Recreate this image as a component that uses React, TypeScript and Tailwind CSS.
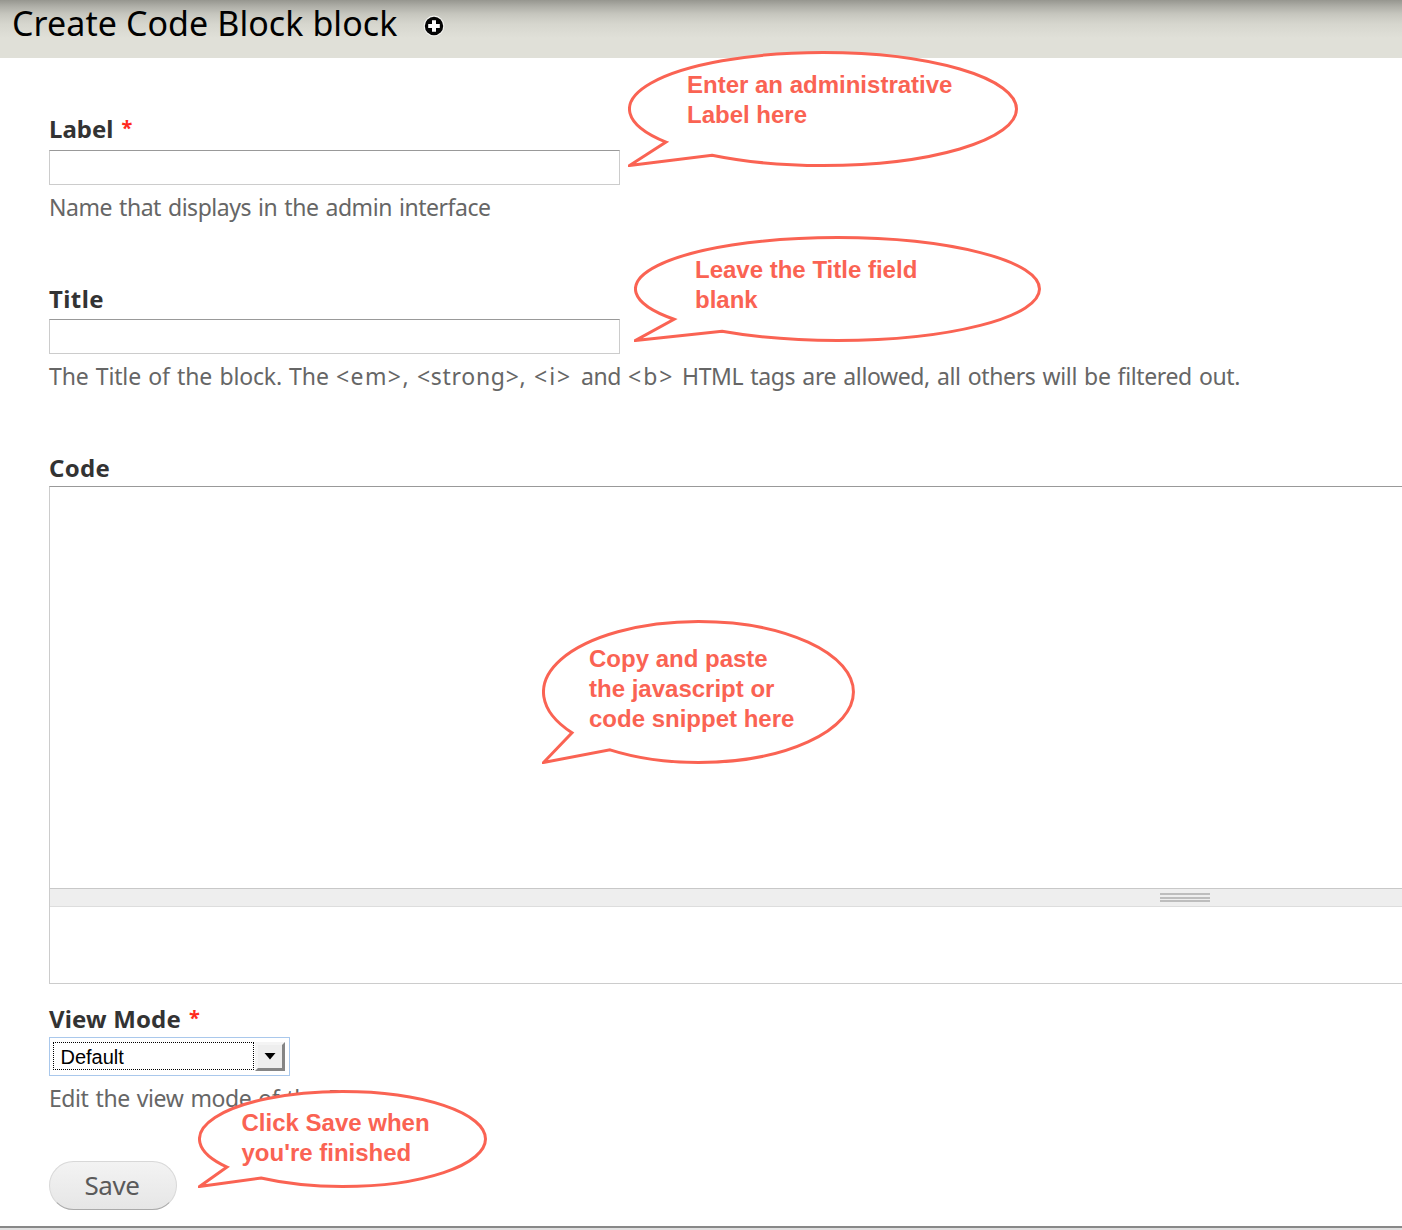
import React from "react";

type CalloutProps = {
  box: string;
  text: string;
  width: number;
  height: number;
  neck: [number, number];
  lines: string[];
};

function Callout({ box, text, width, height, neck, lines }: CalloutProps) {
  const cx = width / 2;
  const cy = height / 2;
  const rx = cx - 1.5;
  const ry = cy - 1.5;
  const lowerY = (x: number) => cy + ry * Math.sqrt(1 - ((x - cx) / rx) ** 2);
  const [a, b] = neck;
  return (
    <div className={`absolute ${box}`}>
      <svg className="block overflow-hidden" width={width} height={height}>
        <path
          d={`M${a} ${lowerY(a)} A${rx} ${ry} 0 0 1 ${cx} 1.5 A${rx} ${ry} 0 0 1 ${cx} ${height - 1.5} A${rx} ${ry} 0 0 1 ${b} ${lowerY(b)} L1.5 ${height - 1.5} Z`}
          fill="white"
          stroke="#fa6353"
          strokeWidth="3"
          strokeLinejoin="miter"
          strokeMiterlimit="10"
        />
      </svg>
      <div
        className={`absolute whitespace-nowrap font-['Liberation_Sans',sans-serif] text-[24px] leading-[30px] font-bold text-[#fa6353] ${text}`}
      >
        {lines.map((line) => (
          <div key={line}>{line}</div>
        ))}
      </div>
    </div>
  );
}

function Required() {
  return (
    <span className="ml-[8px] inline-block -translate-y-[3px] text-[20px] leading-[24px] font-bold tracking-normal text-[#ff2a20]">
      *
    </span>
  );
}

export default function App() {
  const label = "block h-[32px] whitespace-nowrap text-[24px] leading-[32px] font-bold text-[#333]";
  const desc =
    "mt-[6px] h-[33px] whitespace-nowrap text-[23px] leading-[32px] text-[#666] [word-spacing:1.5px]";
  const input =
    "block h-[35px] w-[571px] border border-[#ccc] border-t-[#999] bg-white outline-none";
  return (
    <div className="relative flex h-[1230px] w-[1402px] flex-col overflow-hidden bg-white font-['Noto_Sans',sans-serif]">
      <header className="flex h-[58px] shrink-0 bg-[linear-gradient(#96968f_0px,#adada6_6px,#c6c6be_14px,#d6d6ce_24px,#e0e0d8_38px)] pl-[12px]">
        <h1 className="h-[46px] whitespace-nowrap text-[34px] leading-[46px] tracking-[0.07px] text-black">
          Create Code Block block
        </h1>
        <svg className="absolute top-[15px] left-[423px]" width="22" height="22" viewBox="0 0 22 22">
          <circle cx="11" cy="11" r="10.4" fill="#f4f4f1" />
          <circle cx="11" cy="11" r="9.2" fill="#050505" />
          <path d="M11 5.2v11.6M5.2 11h11.6" stroke="white" strokeWidth="4" />
        </svg>
      </header>
      <form className="flex flex-col pl-[49px]">
        <label className={`${label} mt-[55px]`}>
          Label
          <Required />
        </label>
        <input className={`${input} mt-[5px]`} />
        <p className={`${desc} tracking-[-0.46px]`}>Name that displays in the admin interface</p>
        <label className={`${label} mt-[59px] tracking-[0.4px]`}>Title</label>
        <input className={`${input} mt-[4px]`} />
        <p className={`${desc} flex`}>
          <span className="w-[240px] shrink-0 tracking-[-0.16px]">The Title of the block. </span>
          <span className="w-[47px] shrink-0">The </span>
          <span className="w-[81px] shrink-0 tracking-[1.4px]">&lt;em&gt;, </span>
          <span className="w-[117px] shrink-0 tracking-[0.7px]">&lt;strong&gt;, </span>
          <span className="w-[47px] shrink-0 tracking-[2px]">&lt;i&gt; </span>
          <span className="w-[47px] shrink-0 tracking-[-0.4px]">and </span>
          <span className="w-[54px] shrink-0 tracking-[2px]">&lt;b&gt; </span>
          <span className="tracking-[-0.37px]">HTML tags are allowed, all others will be filtered out.</span>
        </p>
        <label className={`${label} mt-[59px] tracking-[0.3px]`}>Code</label>
        <div className="mt-[2px] h-[498px] border border-r-0 border-[#ccc] border-t-[#999]">
          <textarea className="block h-[401px] w-full resize-none outline-none" />
          <div className="flex h-[19px] flex-col gap-[2px] border-t border-b border-t-[#c8c8c8] border-b-[#ddd] bg-[#eee] pt-[4px] pl-[1110px]">
            <div className="h-[2px] w-[50px] bg-[#bdbdbd]" />
            <div className="h-[2px] w-[50px] bg-[#bdbdbd]" />
            <div className="-mt-px h-[2px] w-[50px] bg-[#bdbdbd]" />
          </div>
        </div>
        <label className={`${label} mt-[19px] tracking-[0.15px]`}>
          View Mode
          <Required />
        </label>
        <div className="mt-[2px] flex h-[39px] w-[241px] items-start border border-[#a9c8ec] pt-[4px] pl-[3px]">
          <div className="h-[28px] w-[201px] border border-dotted border-black pl-[6.5px] font-['Liberation_Sans',sans-serif] text-[20px] leading-[28px] text-black">
            Default
          </div>
          <div className="ml-[1px] flex h-[29px] w-[30px] justify-center border-3 border-t-[#f4f4f4] border-r-[#858585] border-b-[#858585] border-l-[#f4f4f4] bg-[#eee] pt-[8px]">
            <svg width="12" height="7" viewBox="0 0 12 7">
              <path d="M0.5 0h11L6 6.5z" fill="black" />
            </svg>
          </div>
        </div>
        <p className={`${desc} tracking-[-0.42px]`}>Edit the view mode of the Bean.</p>
        <button
          type="button"
          className="mt-[46px] h-[49px] w-[128px] rounded-full border border-[#d8d8d8] border-b-[#aaa] bg-linear-to-b from-[#f3f3f3] to-[#e6e6e6] pr-[2px] pb-[2px] text-[26px] leading-[44px] tracking-[-0.4px] text-[#5a5a5a]"
        >
          Save
        </button>
      </form>
      <div className="mt-auto h-[4px] shrink-0 border-t-2 border-[#888] bg-[#e0e0e0]" />

      <Callout
        box="left-[628px] top-[51px]"
        text="left-[59px] top-[19px]"
        width={390}
        height={116}
        neck={[38, 84]}
        lines={["Enter an administrative", "Label here"]}
      />
      <Callout
        box="left-[634px] top-[236px]"
        text="left-[61px] top-[19px]"
        width={407}
        height={106}
        neck={[40, 88]}
        lines={["Leave the Title field", "blank"]}
      />
      <Callout
        box="left-[542px] top-[620px]"
        text="left-[47px] top-[24px]"
        width={313}
        height={144}
        neck={[30, 68]}
        lines={["Copy and paste", "the javascript or", "code snippet here"]}
      />
      <Callout
        box="left-[198px] top-[1090px]"
        text="left-[43.5px] top-[18px]"
        width={289}
        height={98}
        neck={[29, 63]}
        lines={["Click Save when", "you're finished"]}
      />
    </div>
  );
}
